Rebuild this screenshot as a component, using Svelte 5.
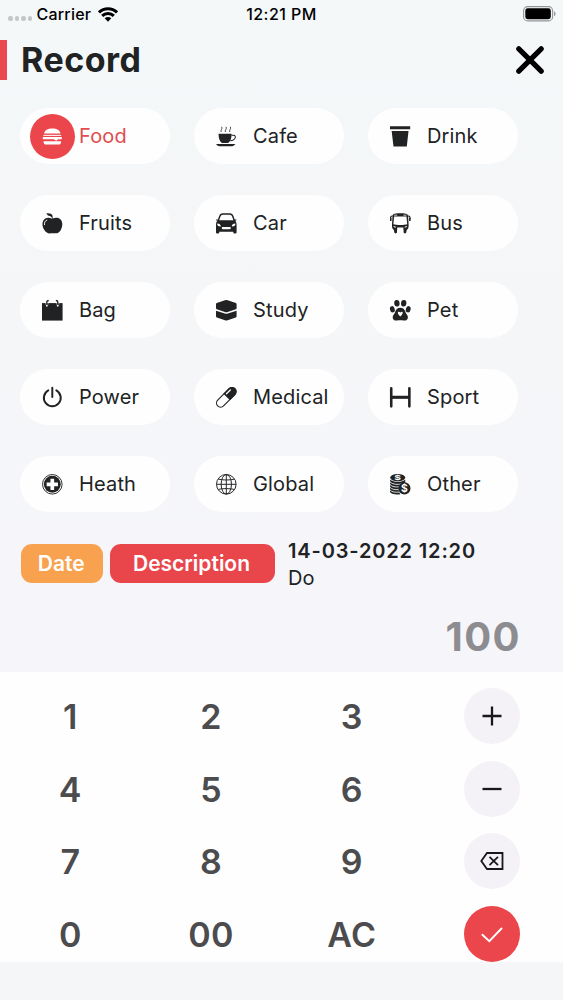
<script>
    const categories = [
        { name: 'Food', icon: 'food' },
        { name: 'Cafe', icon: 'cafe' },
        { name: 'Drink', icon: 'drink' },
        { name: 'Fruits', icon: 'fruits' },
        { name: 'Car', icon: 'car' },
        { name: 'Bus', icon: 'bus' },
        { name: 'Bag', icon: 'bag' },
        { name: 'Study', icon: 'study' },
        { name: 'Pet', icon: 'pet' },
        { name: 'Power', icon: 'power' },
        { name: 'Medical', icon: 'medical' },
        { name: 'Sport', icon: 'sport' },
        { name: 'Heath', icon: 'health' },
        { name: 'Global', icon: 'global' },
        { name: 'Other', icon: 'other' }
    ];

    const keys = [
        '1', '2', '3', 'plus',
        '4', '5', '6', 'minus',
        '7', '8', '9', 'delete',
        '0', '00', 'AC', 'done'
    ];
    const actions = ['plus', 'minus', 'delete', 'done'];

    let selected = $state('Food');
    let amount = $state('100');

    function press(key) {
        if (key === 'AC') {
            amount = '0';
        } else if (key === 'delete') {
            amount = amount.slice(0, -1) || '0';
        } else if (!actions.includes(key)) {
            amount = amount === '0' ? key : amount + key;
        }
    }
</script>

{#snippet categoryIcon(icon)}
    <svg class="icon" viewBox="0 0 20 20" fill="currentColor">
        {#if icon === 'food'}
            <path d="M2 7.4C2.4 4.2 5.6 2.400 10 2.400s7.600 1.800 8 5z" />
            <path d="M1.400 8.600h17.200v1H1.400z" />
            <path d="M.8 10.800h18.400v2h-3.400l-2 1.500-2.400-1.500H.8z" />
            <path d="M1.500 14.700h17v.8c0 1.600-1 2.500-2.600 2.500H4.100c-1.600 0-2.600-.9-2.600-2.500z" />
        {:else if icon === 'cafe'}
            <path d="M2.500 7.500h12.600c0 4.500-1 7.400-3.300 9.100H5.700C3.500 14.900 2.500 12 2.500 7.500z" />
            <path d="M0 17.400h18.800c-1 1.600-2.500 2.200-4.300 2.200H4.300C2.500 19.600 1 19 0 17.400z" />
            <path d="M15 9h2c3 0 2.400 5-3.200 5.400" fill="none" stroke="currentColor" />
            <path d="M5 5.800c-1-1.800 1.600-2.800.6-5M9.200 5.800c-1-1.800 1.600-2.800.6-5M13.400 5.800c-1-1.800 1.600-2.800.6-5" fill="none" stroke="currentColor" stroke-width=".8" />
        {:else if icon === 'drink'}
            <path d="M0 .3h19.600v2.900H0zM1.600 4.800H18L16.300 20H3.400z" />
        {:else if icon === 'fruits'}
            <path d="M10.300 5.400c3-1.200 6.200-1.100 8.200 1.300 2.500 3.400 1 9.600-2.400 12.200-2 1.400-3.500.7-5.800.7s-3.600.7-5.600-.6C1 16.500-.9 10.200 1.600 6.700c2-2.500 5.300-2.600 8.100-1.200 0-1.200-.7-2-2.100-2.500C6 2.700 5 1.800 4.200.2c3.200-.3 5.500.3 6.100 2.500z" />
            <path d="M2.400 11.300c-.2-2.200.6-3.700 2.300-4.400" fill="none" stroke="#fff" stroke-width=".9" stroke-linecap="round" />
        {:else if icon === 'car'}
            <path d="M2.200 7.500 3.600 3.400C4.200 1.600 5 1 6.600 1h6.800c1.600 0 2.400.6 3 2.400l1.400 4.100" fill="none" stroke="currentColor" stroke-width="1.400" />
            <path fill-rule="evenodd" d="M2 7h16c1.300.8 2 2.200 2 4.300V19c0 1.300-3.200 1.300-3.200 0v-.8H3.200v.8c0 1.300-3.200 1.300-3.200 0v-7.700C0 9.200.7 7.800 2 7zm-.8 3.200c-.2 2 .8 3 3.500 2.900-.1-1.900-1.300-2.900-3.500-2.900zm17.600 0c-2.200 0-3.400 1-3.500 2.900 2.700.1 3.700-.9 3.500-2.900zM6.300 13.600c-.9 0-.9 2.100 0 2.100h7.400c.9 0 .9-2.100 0-2.100z" />
            <path d="M0 6.300h2.600v1.200H.6zM20 6.300h-2.600v1.200h2z" />
        {:else if icon === 'bus'}
            <path fill-rule="evenodd" d="M4.500.8C8 .2 12 .2 15.500.8c1.600.3 2 1.300 2.100 2.600l.5 8.200c0 2.500-.4 4-1.500 4.400H3.400c-1.100-.4-1.500-1.900-1.500-4.400l.5-8.200c.1-1.300.5-2.300 2.100-2.600zM4 3.300 3.300 11c2.300.9 11.100.9 13.400 0L16 3.300zM3.400 12.600c0 1 .9 1.500 2.600 1.500-.2-.9-1.100-1.400-2.600-1.500zm13.200 0c-1.500.1-2.400.6-2.600 1.500 1.700 0 2.600-.5 2.600-1.500zM7 14.200V16h6v-1.800z" />
            <path d="M3.500 15.500h3.300v3.300c0 1.400-2.600 1.400-2.600 0zM13.200 15.500h3.300l-.7 3.300c0 1.400-2.600 1.400-2.600 0z" />
            <path d="M2.700 3C.8 2.700.4 3.700.6 6M17.300 3c1.900-.3 2.300.7 2.100 3" fill="none" stroke="currentColor" />
            <path d="M0 4.500h1.500v3.300H0zM18.500 4.500H20v3.300h-1.500z" />
            <path d="M4 1.700h3v.7H4zM13 1.700h3v.7h-3z" fill="#fff" />
        {:else if icon === 'bag'}
            <path d="M0 3h20v17H0z" />
            <path d="M4.700 5.500V1.700C4.700.8 5.400.5 6.500.5M15.300 5.500V1.700c0-.9-.7-1.200-1.800-1.200" fill="none" stroke="currentColor" stroke-width="1.300" />
            <circle cx="4.700" cy="5.500" r=".9" fill="#fff" />
            <circle cx="15.300" cy="5.500" r=".9" fill="#fff" />
            <path d="M3.600 2.500v2M5.900 2.500v2M14.200 2.500v2M16.500 2.500v2" stroke="#fff" stroke-width=".5" />
        {:else if icon === 'study'}
            <path d="M8.700.3Q10-.2 11.300.3L19.300 2.900q.7.300.7 1v4.200q0 .8-.8 1l-7.900 2.500q-1.300.5-2.600 0L.8 9.100Q0 8.800 0 8.100V3.900q0-.7.7-1z" />
            <path d="M0 10.400l8.600 2.700q1.400.4 2.800 0L20 10.400v5.400q0 .8-.8 1.100l-7.900 2.700q-1.300.5-2.600 0L.8 16.900Q0 16.600 0 15.800z" />
        {:else if icon === 'pet'}
            <ellipse cx="6.700" cy="3.200" rx="2.600" ry="3.200" transform="rotate(-6 6.700 3.200)" />
            <ellipse cx="13.300" cy="3.200" rx="2.600" ry="3.200" transform="rotate(6 13.300 3.200)" />
            <ellipse cx="2.300" cy="9" rx="2.300" ry="3.100" transform="rotate(-15 2.300 9)" />
            <ellipse cx="17.700" cy="9" rx="2.300" ry="3.100" transform="rotate(15 17.700 9)" />
            <path d="M10 7.600c2.800 0 4.500 1.900 5.100 4.200.4 1.700 2.300 2.500 2.300 4.900 0 2.700-2.300 3.700-4.300 3.200-2-.4-4.200-.4-6.200 0-2 .5-4.300-.5-4.300-3.200 0-2.400 1.900-3.200 2.300-4.900.6-2.300 2.300-4.200 5.100-4.200z" />
            <path d="M10 16c-4.100-3.300-2-5.700 0-3.800 2-1.900 4.100.5 0 3.800z" fill="#fff" />
        {:else if icon === 'power'}
            <path d="M6.100 3.300a8.200 8.200 0 1 0 7.800 0M10 .8v9" fill="none" stroke="currentColor" stroke-width="1.900" stroke-linecap="round" />
        {:else if icon === 'medical'}
            <g transform="rotate(45 10 10)">
                <rect x="6" y="-1.800" width="8" height="23.600" rx="4" fill="none" stroke="currentColor" stroke-width="1.100" />
                <path d="M5.500 9.500V2.200a4.500 4.500 0 0 1 9 0v7.300z" />
                <path d="M7.700 7.500V2.200" stroke="#fff" stroke-width="1.200" stroke-linecap="round" />
            </g>
        {:else if icon === 'sport'}
            <path d="M1.200 1.200v17.600M18.800 1.200v17.600" fill="none" stroke="currentColor" stroke-width="2.500" stroke-linecap="round" />
            <path d="M1.200 10h17.600" stroke="currentColor" stroke-width="3" />
        {:else if icon === 'health'}
            <circle cx="10" cy="10" r="9.500" fill="none" stroke="currentColor" stroke-width=".9" />
            <circle cx="10" cy="10" r="8.200" />
            <path d="M8.200 4.500h3.600v3.700h3.700v3.600h-3.700v3.700H8.200v-3.700H4.500V8.200h3.700z" fill="#fff" />
        {:else if icon === 'global'}
            <g fill="none" stroke="currentColor" stroke-width=".95">
                <circle cx="10" cy="10" r="9.500" />
                <ellipse cx="10" cy="10" rx="5" ry="9.500" />
                <path d="M10 .5v19M.5 10h19M2.200 5c4 1.100 11.600 1.100 15.600 0M2.200 15c4-1.100 11.600-1.100 15.600 0" />
            </g>
        {:else}
            <ellipse cx="7.500" cy="3.500" rx="7.300" ry="3.500" />
            <path d="M.2 5.300c2.500 3 12.100 3 14.600 0v3.500c-4 .4-6.800 3.200-6.500 7.100.2 1.500.8 2.700 1.700 3.700-4.400.8-9.200-.2-10-2z" />
            <path d="M0 7.700c2 2.400 7.500 3 11.500 1.900M0 10.300c2 2.200 5.500 2.600 9 2.100M0 12.900c2 2.200 5 2.500 8.200 2.200M0 15.500c2 2.100 5 2.400 8.700 2.100" fill="none" stroke="#fff" stroke-width=".8" />
            <text x="0" y="0" class="coin" font-size="6" transform="translate(7.500 5.600) scale(1.700 1)">$</text>
            <circle cx="14" cy="14" r="5.900" />
            <text x="14" y="17.700" class="coin" font-size="10">$</text>
        {/if}
    </svg>
{/snippet}

{#snippet actionIcon(action)}
    <svg class="action-icon" viewBox="0 0 24 24" fill="none" stroke="currentColor" stroke-width="2.300">
        {#if action === 'plus'}
            <path d="M12 2.500v19M2.500 12h19" />
        {:else if action === 'minus'}
            <path d="M2.500 12h19" />
        {:else if action === 'delete'}
            <path d="M7 4h15.500v16H7L1.300 12z" stroke-width="1.800" />
            <path d="m9.500 7.800 8.500 8.400M18 7.800l-8.500 8.400" stroke-width="1.800" />
        {:else}
            <path d="m1.800 12.200 7.500 7L22 6" stroke-width="1.900" />
        {/if}
    </svg>
{/snippet}

<main class="screen">
    <div class="status">
        <div class="carrier">
            <span class="dots"><i></i><i></i><i></i><i></i></span>
            <span>Carrier</span>
            <svg class="wifi" viewBox="0 0 20 15" fill="none" stroke="#000" stroke-width="3">
                <path d="M1 5.400c5-5 13-5 18 0M4.200 8.900c3.200-3.300 8.400-3.300 11.600 0" />
                <path d="M6.700 11.300c1.900-1.800 4.700-1.800 6.600 0L10 14.700z" fill="#000" stroke="none" />
            </svg>
        </div>
        <span class="time">12:21 PM</span>
        <svg class="battery" viewBox="0 0 33 16">
            <rect x=".6" y=".6" width="29" height="14.300" rx="4" fill="none" stroke="#929597" stroke-width="1.100" />
            <rect x="2.300" y="2.300" width="25.500" height="10.900" rx="2.400" />
            <path d="M31 5.300c2 .8 2 4.100 0 4.900z" fill="#929597" />
        </svg>
    </div>

    <header>
        <h1>Record</h1>
        <button class="close" aria-label="Close">
            <svg viewBox="0 0 28 28" stroke="#000" stroke-width="5.200" stroke-linecap="round">
                <path d="m2.800 2.800 22.400 22.400M25.200 2.800 2.800 25.200" />
            </svg>
        </button>
    </header>

    <section class="categories">
        {#each categories as { name, icon } (name)}
            <button class="category" class:active={selected === name} onclick={() => (selected = name)}>
                <span class="bubble">{@render categoryIcon(icon)}</span>
                <span>{name}</span>
            </button>
        {/each}
    </section>

    <section class="details">
        <button class="tag date">Date</button>
        <button class="tag description">Description</button>
        <div class="info">
            <strong>14-03-2022 12:20</strong>
            <span>Do</span>
        </div>
    </section>

    <div class="amount">{amount}</div>

    <section class="keypad">
        {#each keys as key}
            {#if actions.includes(key)}
                <button class="action" class:done={key === 'done'} aria-label={key} onclick={() => press(key)}>
                    {@render actionIcon(key)}
                </button>
            {:else}
                <button class="key" onclick={() => press(key)}>{key}</button>
            {/if}
        {/each}
    </section>
</main>

<style>
    :global(body) {
        background: #f4f6f8;
    }

    .screen {
        box-sizing: border-box;
        width: 563px;
        height: 1000px;
        overflow: hidden;
        display: flex;
        flex-direction: column;
        background: linear-gradient(#f4f8f9 0, #f5f6f8 280px, #f6f6fa 672px, #f4f6f8 962px);
        color: #202224;
        font-family: Inter, 'Liberation Sans', sans-serif;
    }

    button {
        padding: 0;
        border: 0;
        background: none;
        color: inherit;
        font: inherit;
        letter-spacing: inherit;
        cursor: pointer;
    }

    svg {
        display: block;
        flex: none;
    }

    .status {
        height: 28px;
        flex: none;
        display: grid;
        grid-template-columns: 1fr auto 1fr;
        align-items: center;
        padding: 0 7px 0 8px;
        box-sizing: border-box;
        color: #000;
        font-size: 16px;
        font-weight: 450;
        letter-spacing: 0.2px;
    }

    .carrier {
        display: flex;
        align-items: center;
    }

    .dots {
        display: flex;
        gap: 2px;
        margin: 9px 4.5px 0 0;
    }

    .dots i {
        width: 4.5px;
        height: 4.5px;
        border-radius: 50%;
        background: #c4c7c8;
    }

    .wifi {
        width: 20px;
        height: 15px;
        margin-left: 7px;
    }

    .time {
        margin-right: 1px;
        letter-spacing: 0.45px;
    }

    .battery {
        width: 33px;
        height: 16px;
        justify-self: end;
    }

    header {
        height: 64px;
        flex: none;
        display: flex;
        align-items: center;
        justify-content: space-between;
        padding-right: 19px;
    }

    h1 {
        margin: 0;
        padding-left: 14px;
        border-left: 7px solid #e9484e;
        font-size: 34px;
        line-height: 40px;
        font-weight: 700;
        letter-spacing: 0.5px;
    }

    .close svg {
        width: 28px;
        height: 28px;
    }

    .categories {
        display: grid;
        grid-template-columns: repeat(3, 150px);
        grid-auto-rows: 56px;
        gap: 31px 24px;
        padding: 16px 0 0 20px;
        flex: none;
    }

    .category {
        display: flex;
        align-items: center;
        gap: 4px;
        padding-left: 10px;
        border-radius: 28px;
        background: #fefefe;
        font-size: 20px;
        letter-spacing: 0.15px;
    }

    .bubble {
        width: 45px;
        height: 45px;
        display: grid;
        place-items: center;
        border-radius: 50%;
    }

    .active {
        color: #df4d50;
    }

    .active .bubble {
        background: #ea464b;
        color: #fff;
    }

    .icon {
        width: 20.6px;
        height: 20.6px;
        overflow: visible;
    }

    .coin {
        fill: #fff;
        font-weight: 700;
        letter-spacing: 0;
        text-anchor: middle;
    }

    .details {
        height: 50px;
        flex: none;
        display: flex;
        align-items: center;
        margin-top: 27px;
        padding-left: 20.5px;
    }

    .tag {
        height: 39px;
        margin-bottom: 1px;
        border-radius: 11px;
        color: #fff;
        font-size: 21px;
        font-weight: 600;
    }

    .date {
        width: 82.5px;
        margin-right: 7px;
        padding-right: 1px;
        background: #f8a24f;
    }

    .description {
        width: 165px;
        padding-right: 2px;
        background: #e9464b;
    }

    .info {
        display: flex;
        flex-direction: column;
        padding: 1px 0 0 13px;
        font-size: 20px;
        line-height: 27px;
    }

    .info strong {
        font-weight: 600;
        letter-spacing: 0.85px;
    }

    .amount {
        height: 83px;
        flex: none;
        box-sizing: border-box;
        padding: 23px 42px 0 0;
        color: #8d8d91;
        font-size: 40px;
        font-weight: 700;
        line-height: 49px;
        letter-spacing: 1.4px;
        text-align: right;
    }

    .keypad {
        height: 290px;
        flex: none;
        box-sizing: border-box;
        padding-top: 16px;
        display: grid;
        grid-template-columns: repeat(4, 1fr);
        grid-auto-rows: 56px;
        align-content: space-between;
        background: #fefefe;
    }

    .key {
        padding-top: 1px;
        color: #4c4c4e;
        font-size: 34px;
        font-weight: 600;
        letter-spacing: 0.4px;
    }

    .action {
        width: 56px;
        height: 56px;
        display: grid;
        place-items: center;
        justify-self: center;
        margin-right: 1px;
        border-radius: 50%;
        background: #f4f2f6;
        color: #18181a;
    }

    .done {
        background: #ea464b;
        color: #fff;
    }

    .action-icon {
        width: 24px;
        height: 24px;
    }
</style>
